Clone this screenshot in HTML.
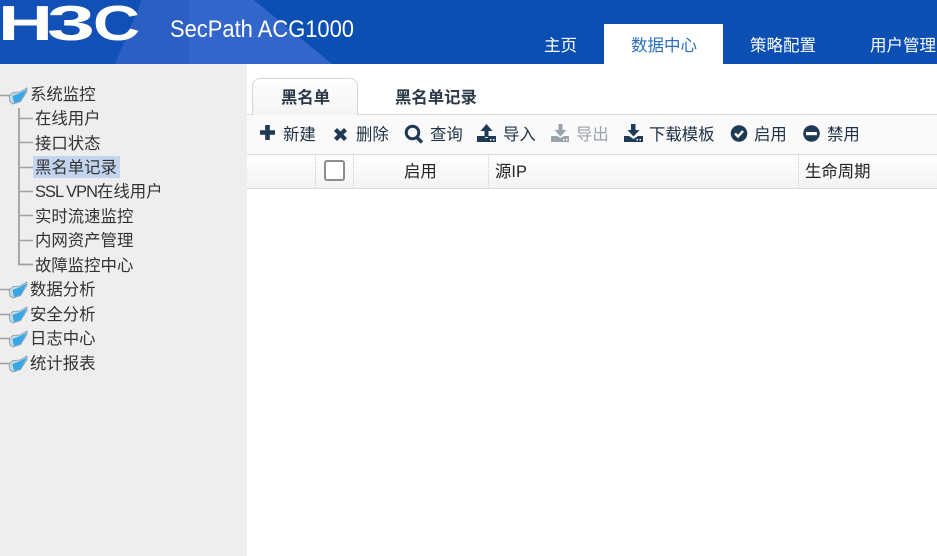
<!DOCTYPE html>
<html><head><meta charset="utf-8"><style>
html,body{margin:0;padding:0;width:937px;height:556px;overflow:hidden;background:#fff}
body{position:relative;font-family:"Liberation Sans","Noto Sans CJK SC",sans-serif;font-size:16.4px;color:#333}
.a{position:absolute;white-space:nowrap;line-height:20px;margin-top:.5px}
.nav{position:absolute;top:35px;color:#fff;font-size:16.500px;line-height:22px;white-space:nowrap}
.t{position:absolute;color:#1f3144;line-height:20px;top:125px;white-space:nowrap}
.th{position:absolute;color:#222;line-height:20px;top:162px;white-space:nowrap}
svg{position:absolute;overflow:visible}
.sep{position:absolute;top:155px;height:33px;border-left:1px dotted #ccc}
</style></head><body>

<svg style="left:0;top:0" width="937" height="64">
<rect width="937" height="64" fill="#0b4fb3"/>
<polygon points="0,0 142,0 115,64 0,64" fill="#1150b7"/>
<polygon points="142,0 254,0 332,64 115,64" fill="#3366cb"/>
<polygon points="142,0 189,0 189,64 115,64" fill="#2b5fc3"/>
<g font-family="Liberation Sans" font-weight="700" font-size="49" fill="#fff">
<text x="-2" y="40" textLength="55" lengthAdjust="spacingAndGlyphs">H</text>
<text x="47" y="40" textLength="48" lengthAdjust="spacingAndGlyphs">3</text>
<text x="93" y="40" textLength="47" lengthAdjust="spacingAndGlyphs">C</text>
</g>
<text x="170" y="37" font-family="Liberation Sans" font-size="24" fill="#fff" textLength="184" lengthAdjust="spacingAndGlyphs">SecPath ACG1000</text>
</svg>
<div style="position:absolute;left:604px;top:24px;width:119px;height:40px;background:#fff"></div>
<div class="nav" style="left:544px">主页</div>
<div class="nav" style="left:631px;color:#2a6fc0">数据中心</div>
<div class="nav" style="left:750px">策略配置</div>
<div class="nav" style="left:870px">用户管理</div>

<div style="position:absolute;left:0;top:64px;width:247px;height:492px;background:#eeeeef"></div>
<div style="position:absolute;left:33px;top:156px;width:87px;height:22px;background:#c3d4ee"></div>

<svg style="left:0;top:0" width="247" height="556">
<g stroke="#a0a0a0" fill="none">
<path d="M19 108V264.500H33" stroke-width="1.800"/>
<path d="M20 118.500H33M20 142.500H33M20 167.500H33M20 191.500H33M20 215.500H33M20 240.500H33" stroke-width="1.400"/>
<path d="M0 95.500H11M0 289.500H11M0 314.500H11M0 338.500H11M0 363.500H11" stroke-width="1.400"/>
</g>
<defs>
<g id="fo">
<path d="M9 96L13 92.500L20 92L27 88L27 91.500L20.500 101.500L13 104L10 102Z" fill="#c6d8e2" stroke="#7f9bab" stroke-width=".8"/>
<path d="M12.500 96L19 93.500L27 89.500L20.500 101L14 103Z" fill="#35a6e6"/>
</g></defs>
<use href="#fo"/>
<use href="#fo" y="194"/>
<use href="#fo" y="219"/>
<use href="#fo" y="243"/>
<use href="#fo" y="268"/>
</svg>

<div class="a" style="left:30px;top:84px">系统监控</div>
<div class="a" style="left:35px;top:108px">在线用户</div>
<div class="a" style="left:35px;top:133px">接口状态</div>
<div class="a" style="left:35px;top:157px">黑名单记录</div>
<div class="a" style="left:35px;top:181px"><span style="letter-spacing:-.95px">SSL VPN</span>在线用户</div>
<div class="a" style="left:35px;top:206px">实时流速监控</div>
<div class="a" style="left:35px;top:230px">内网资产管理</div>
<div class="a" style="left:35px;top:255px">故障监控中心</div>
<div class="a" style="left:30px;top:279px">数据分析</div>
<div class="a" style="left:30px;top:304px">安全分析</div>
<div class="a" style="left:30px;top:328px">日志中心</div>
<div class="a" style="left:30px;top:353px">统计报表</div>

<div style="position:absolute;left:247px;top:114px;width:690px;height:39px;background:#fafafa;border-top:1px solid #dcdcdc;border-bottom:1px solid #dcdcdc"></div>
<div style="position:absolute;left:252px;top:78px;width:104px;height:36px;border:1px solid #d4d4d4;border-bottom:0;border-radius:8px 8px 0 0;background:linear-gradient(#fff,#f3f3f3)"></div>
<div class="a" style="left:281px;top:87px;font-weight:700;color:#2c3a48">黑名单</div>
<div class="a" style="left:395px;top:87px;font-weight:700;color:#2c3a48">黑名单记录</div>

<div style="position:absolute;left:247px;top:155px;width:690px;height:33px;background:linear-gradient(#fff,#f3f3f3);border-bottom:1px solid #dcdcdc"></div>
<div class="sep" style="left:315px"></div>
<div class="sep" style="left:353px"></div>
<div class="sep" style="left:488px"></div>
<div class="sep" style="left:798px"></div>
<div style="position:absolute;left:324px;top:160px;width:17px;height:17px;border:2px solid #8d8d8d;border-radius:3px;background:#fff"></div>
<div class="th" style="left:404px">启用</div>
<div class="th" style="left:495px">源IP</div>
<div class="th" style="left:805px">生命周期</div>

<svg style="left:0;top:0" width="937" height="200" fill="#1f3a54">
<path d="M265.200 125h4.600v5.200h5.200v4.600h-5.200v5.200h-4.600v-5.200h-5.200v-4.600h5.200z"/>
<path d="M337 128l3.500 3.500 3.500-3.500 3 3-3.500 3.500 3.500 3.500-3 3-3.500-3.500-3.500 3.500-3-3 3.500-3.500-3.500-3.500z"/>
<circle cx="412.500" cy="132.500" r="6.300" fill="none" stroke="#1f3a54" stroke-width="3"/><path d="M417 137.500l5 5" stroke="#1f3a54" stroke-width="3.400" fill="none"/>

<path d="M486.500 124l6 7h-4v6h-4v-6h-4z"/>
<path d="M477 136h8v2h3v-2h8v6h-19z"/><rect x="490" y="139" width="1.500" height="1.500" fill="#fff"/><rect x="493" y="139" width="1.500" height="1.500" fill="#fff"/>

<g fill="#9aa3ad"><path d="M558.500 124h4v6h4l-6 6.500-6-6.500h4z"/><path d="M551 136h6l3.500 2 3.500-2h5v6h-18z"/></g>
<rect x="563" y="139" width="1.500" height="1.500" fill="#fff"/><rect x="566" y="139" width="1.500" height="1.500" fill="#fff"/>

<path d="M631 124h4.500v6h4l-6 6.500-6-6.500h3.500z"/><path d="M624 136h5l4.500 3 4.500-3h5v6h-19z"/>
<rect x="636.500" y="139" width="1.500" height="1.500" fill="#fff"/><rect x="639.500" y="139" width="1.500" height="1.500" fill="#fff"/>

<circle cx="739" cy="133.500" r="8.300"/><path d="M735 133.500l3 3 5-5.500" stroke="#fff" stroke-width="2.400" fill="none"/>
<circle cx="811.500" cy="133.500" r="8.300"/><rect x="806" y="132" width="11" height="3.200" fill="#fff"/>
</svg>
<div class="t" style="left:283px">新建</div>
<div class="t" style="left:356px">删除</div>
<div class="t" style="left:430px">查询</div>
<div class="t" style="left:503px">导入</div>
<div class="t" style="left:576px;color:#9aa3ad">导出</div>
<div class="t" style="left:649px">下载模板</div>
<div class="t" style="left:754px">启用</div>
<div class="t" style="left:827px">禁用</div>
</body></html>
